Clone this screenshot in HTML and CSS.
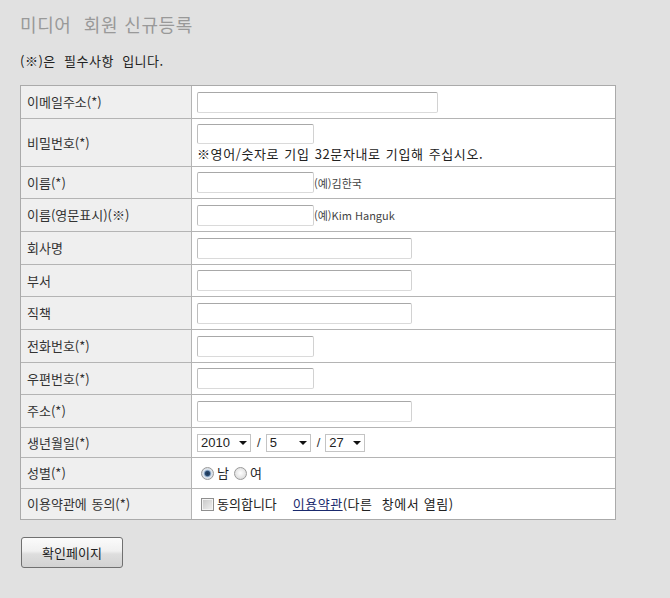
FILE: index.html
```html
<!DOCTYPE html>
<html lang="ko">
<head>
<meta charset="utf-8">
<title>미디어 회원 신규등록</title>
<link rel="stylesheet" href="styles.css">
</head>
<body>
<div class="page">
  <h1 class="title">미디어&nbsp; 회원 신규등록</h1>
  <p class="note">(※)은&nbsp; 필수사항&nbsp; 입니다.</p>

  <div class="form">
    <div class="row h33">
      <div class="label">이메일주소(*)</div>
      <div class="value"><input type="text" class="txt w241"></div>
    </div>
    <div class="row h48">
      <div class="label">비밀번호(*)</div>
      <div class="value stack">
        <input type="password" class="txt w117 h20">
        <span class="pw-note">※영어/숫자로 기입 32문자내로 기입해 주십시오.</span>
      </div>
    </div>
    <div class="row h32">
      <div class="label">이름(*)</div>
      <div class="value"><input type="text" class="txt w117"><span class="hint">(예)김한국</span></div>
    </div>
    <div class="row h33">
      <div class="label">이름(영문표시)(※)</div>
      <div class="value"><input type="text" class="txt w117"><span class="hint">(예)Kim Hanguk</span></div>
    </div>
    <div class="row h33">
      <div class="label">회사명</div>
      <div class="value"><input type="text" class="txt w215"></div>
    </div>
    <div class="row h32">
      <div class="label">부서</div>
      <div class="value"><input type="text" class="txt w215"></div>
    </div>
    <div class="row h33">
      <div class="label">직책</div>
      <div class="value"><input type="text" class="txt w215"></div>
    </div>
    <div class="row h33">
      <div class="label">전화번호(*)</div>
      <div class="value"><input type="text" class="txt w117"></div>
    </div>
    <div class="row h32">
      <div class="label">우편번호(*)</div>
      <div class="value"><input type="text" class="txt w117"></div>
    </div>
    <div class="row h33">
      <div class="label">주소(*)</div>
      <div class="value"><input type="text" class="txt w215"></div>
    </div>
    <div class="row h30">
      <div class="label">생년월일(*)</div>
      <div class="value">
        <span class="sel w54"><select><option>2010</option></select></span>
        <span class="slash">/</span>
        <span class="sel w45"><select><option>5</option></select></span>
        <span class="slash">/</span>
        <span class="sel w40"><select><option>27</option></select></span>
      </div>
    </div>
    <div class="row h31">
      <div class="label">성별(*)</div>
      <div class="value">
        <label class="opt"><input type="radio" name="sex" checked>남</label>
        <label class="opt"><input type="radio" name="sex">여</label>
      </div>
    </div>
    <div class="row h30">
      <div class="label">이용약관에 동의(*)</div>
      <div class="value">
        <label class="opt"><input type="checkbox">동의합니다</label>
        <span class="terms"><a href="#" class="link">이용약관</a>(다른&nbsp; 창에서 열림)</span>
      </div>
    </div>
  </div>

  <button type="button" class="btn">확인페이지</button>
</div>
</body>
</html>
```

FILE: styles.css
```css
html, body {
  margin: 0;
  padding: 0;
}

body {
  background: #e1e1e1;
  font-family: "Noto Sans CJK KR", "Liberation Sans", sans-serif;
  font-size: 13px;
  color: #222;
  word-spacing: 1px;
  min-height: 598px;
}

.page {
  padding: 12px 0 0 20px;
}

.title {
  margin: 0;
  font-size: 18px;
  line-height: 24px;
  font-weight: normal;
  color: #999;
  word-spacing: 0.5px;
  letter-spacing: 0.6px;
}

.note {
  margin: 17px 0 0 0;
  font-size: 13px;
  line-height: 16px;
  color: #222;
  word-spacing: 0;
  letter-spacing: 0.5px;
}

.form {
  margin-top: 16px;
  width: 596px;
  box-sizing: border-box;
  border: 1px solid #aaaaaa;
  background: #fff;
}

.row {
  display: grid;
  grid-template-columns: 171px 1fr;
  box-sizing: border-box;
  border-bottom: 1px solid #b4b4b4;
}

.row:last-child {
  border-bottom: 0;
}

.h30 { height: 30px; }
.h31 { height: 31px; }
.h32 { height: 32px; }
.h33 { height: 33px; }
.h48 { height: 48px; }

.label {
  background: #efefef;
  border-right: 1px solid #b4b4b4;
  display: flex;
  align-items: center;
  padding-left: 6px;
  color: #333;
  line-height: 16px;
}

.value {
  display: flex;
  align-items: center;
  padding-left: 5px;
  line-height: 16px;
}

.value.stack {
  flex-direction: column;
  align-items: flex-start;
  justify-content: flex-start;
  padding-top: 5px;
}

.txt {
  box-sizing: border-box;
  height: 21px;
  margin: 0;
  padding: 1px 3px;
  border: 1px solid;
  border-color: #a8a8a8 #d2d2d2 #dadada #bdbdbd;
  border-radius: 2px;
  background: #fff;
  font-family: "Noto Sans CJK KR", "Liberation Sans", sans-serif;
  font-size: 12px;
  outline: none;
}

.h20 { height: 20px; }
.w241 { width: 241px; }
.w215 { width: 215px; }
.w117 { width: 117px; }

.pw-note {
  margin-top: 2px;
  font-size: 13px;
  line-height: 16px;
  color: #222;
  letter-spacing: 0.6px;
}

.hint {
  font-size: 11px;
  color: #444;
  line-height: 14px;
  word-spacing: 0;
}

.sel {
  position: relative;
  display: inline-block;
  height: 18px;
}

.sel.w54 { width: 54px; }
.sel.w45 { width: 45px; }
.sel.w40 { width: 40px; }

.sel select {
  -webkit-appearance: none;
  appearance: none;
  box-sizing: border-box;
  width: 100%;
  height: 18px;
  margin: 0;
  padding: 0 0 0 3px;
  border: 1px solid #c4c4c4;
  border-radius: 0;
  background: #fff;
  font-family: "Liberation Sans", sans-serif;
  font-size: 13px;
  line-height: 16px;
  color: #222;
  outline: none;
}

.sel::after {
  content: "";
  position: absolute;
  right: 4px;
  top: 7px;
  width: 0;
  height: 0;
  border-left: 4px solid transparent;
  border-right: 4px solid transparent;
  border-top: 4px solid #111;
  pointer-events: none;
}

.slash {
  margin: 0 5px 0 6px;
  font-family: "Liberation Sans", sans-serif;
  font-size: 13px;
  color: #333;
}

.opt {
  display: inline-flex;
  align-items: center;
  font-size: 13px;
  color: #222;
}

.opt input[type="radio"] {
  -webkit-appearance: none;
  appearance: none;
  box-sizing: border-box;
  width: 13px;
  height: 13px;
  margin: 0 3px 0 4px;
  border: 1px solid #9a9a9a;
  border-radius: 50%;
  background: radial-gradient(circle at 50% 45%, #ffffff 0, #e4e4e4 60%, #c9c9c9 100%);
}

.opt input[type="radio"]:checked {
  background: radial-gradient(circle, #1d3550 0, #2a4a70 2.2px, #8eaac8 3.2px, #dfe6ee 4.2px, #cfcfcf 100%);
}

.opt + .opt input[type="radio"] {
  margin-left: 5px;
}

.opt input[type="checkbox"] {
  -webkit-appearance: none;
  appearance: none;
  box-sizing: border-box;
  width: 13px;
  height: 13px;
  margin: 0 3px 0 4px;
  border: 1px solid #8f8f8f;
  border-radius: 0;
  background: linear-gradient(135deg, #c6c6c6 0%, #dcdcdc 50%, #f2f2f2 100%);
  box-shadow: inset 0 0 0 1px #f4f4f4;
}

.terms {
  margin-left: 16px;
  color: #222;
  word-spacing: 0.5px;
  letter-spacing: 0.5px;
}

.link {
  color: #1a2a6e;
  text-decoration: underline;
}

.btn {
  display: block;
  margin: 17px 0 0 1px;
  width: 102px;
  height: 31px;
  box-sizing: border-box;
  border: 1px solid #707070;
  border-radius: 3px;
  background: linear-gradient(#fbfbfb 0%, #f0f0f0 45%, #dedede 55%, #d2d2d2 100%);
  font-family: "Noto Sans CJK KR", "Liberation Sans", sans-serif;
  font-size: 13px;
  color: #222;
  padding: 0;
}
```
